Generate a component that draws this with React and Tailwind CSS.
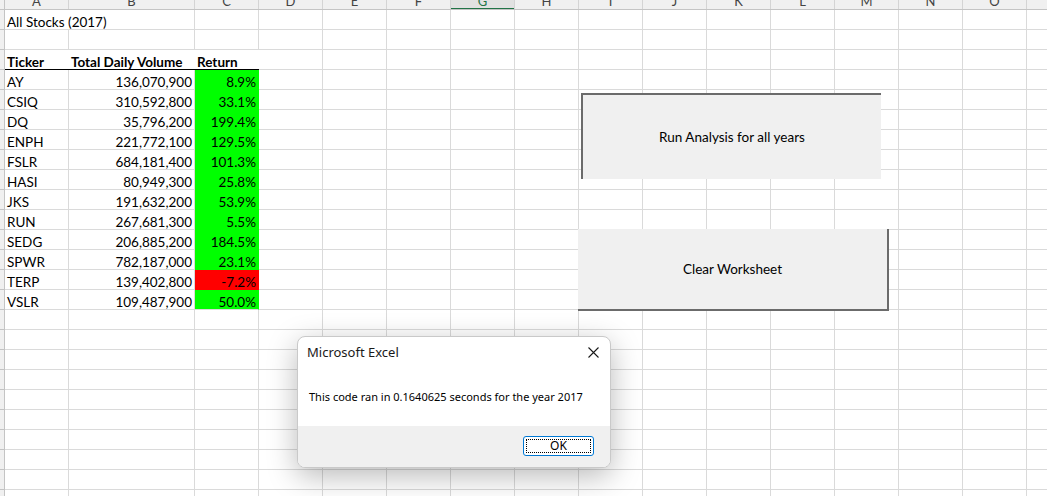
import React from "react";

const cols = [
  { key: "A", w: 64 },
  { key: "B", w: 126 },
  { key: "C", w: 64 },
  { key: "D", w: 64 },
  { key: "E", w: 64 },
  { key: "F", w: 64 },
  { key: "G", w: 64 },
  { key: "H", w: 64 },
  { key: "I", w: 64 },
  { key: "J", w: 64 },
  { key: "K", w: 64 },
  { key: "L", w: 64 },
  { key: "M", w: 64 },
  { key: "N", w: 64 },
  { key: "O", w: 64 },
  { key: "P", w: 64 },
];

const stocks = [
  ["AY", "136,070,900", "8.9%", true],
  ["CSIQ", "310,592,800", "33.1%", true],
  ["DQ", "35,796,200", "199.4%", true],
  ["ENPH", "221,772,100", "129.5%", true],
  ["FSLR", "684,181,400", "101.3%", true],
  ["HASI", "80,949,300", "25.8%", true],
  ["JKS", "191,632,200", "53.9%", true],
  ["RUN", "267,681,300", "5.5%", true],
  ["SEDG", "206,885,200", "184.5%", true],
  ["SPWR", "782,187,000", "23.1%", true],
  ["TERP", "139,402,800", "-7.2%", false],
  ["VSLR", "109,487,900", "50.0%", true],
];

const ROWS = 25;

function HeaderRow() {
  return (
    <div className="flex h-[10px] overflow-hidden border-b border-[#c4c4c4] bg-[#f0f0f0]">
      <div className="h-full w-[5px] shrink-0 border-r border-[#c4c4c4]" />
      {cols.map((c) => (
        <div
          key={c.key}
          style={{ width: c.w }}
          className={
            "relative h-full shrink-0 border-r border-[#d4d4d4] " +
            (c.key === "G" ? "bg-[#e1e1e1]" : "")
          }
        >
          <div
            className={
              "absolute inset-x-0 -top-[9px] text-center text-[13px] leading-[20px] " +
              (c.key === "G" ? "text-[#217346]" : "text-[#444]")
            }
          >
            {c.key}
          </div>
          {c.key === "G" && (
            <div className="absolute inset-x-0 -bottom-[1px] h-[2px] bg-[#217346]" />
          )}
        </div>
      ))}
    </div>
  );
}

function cellContent(r, ci) {
  // r is the 1-based sheet row
  if (r === 1 && ci === 0) return { text: "All Stocks (2017)", overflow: true };
  if (r === 3) {
    if (ci === 0) return { text: "Ticker", bold: true, underline: true };
    if (ci === 1) return { text: "Total Daily Volume", bold: true, underline: true };
    if (ci === 2) return { text: "Return", bold: true, underline: true };
  }
  const s = stocks[r - 4];
  if (s) {
    if (ci === 0) return { text: s[0] };
    if (ci === 1) return { text: s[1], right: true };
    if (ci === 2) return { text: s[2], right: true, fill: s[3] ? "green" : "red" };
  }
  return null;
}

function GridRow({ r }) {
  return (
    <div className="flex h-[20px]">
      <div className="h-full w-[5px] shrink-0 border-r border-b border-[#c4c4c4] bg-[#f0f0f0]" />
      {cols.map((c, ci) => {
        const cell = cellContent(r, ci);
        let border = "border-r border-b border-[#dadada]";
        if (cell && cell.overflow) border = "border-b border-[#dadada]";
        if (cell && cell.underline) border = "border-b border-b-black";
        let bg = "";
        if (cell && cell.fill === "green") bg = "bg-[#00ff00] border-r-[#00ff00] border-b-[#00ff00]";
        if (cell && cell.fill === "red") bg = "bg-[#ff0000] border-r-[#ff0000] border-b-[#ff0000]";
        if (r === 15 && ci === 2) bg = "bg-[#00ff00] border-r-[#00ff00]";
        return (
          <div
            key={c.key}
            style={{ width: c.w }}
            className={
              "relative flex h-full shrink-0 items-end " + border + " " + bg +
              (cell && cell.right ? " justify-end pr-[2px]" : " pl-[2px]")
            }
          >
            {cell && (
              <span
                className={
                  "whitespace-nowrap text-[13.5px] leading-[14px] text-black " +
                  (cell.bold ? "font-bold" : "")
                }
              >
                {cell.text}
              </span>
            )}
          </div>
        );
      })}
    </div>
  );
}

function CloseIcon() {
  return (
    <svg width="11" height="11" viewBox="0 0 11 11">
      <path d="M0.5 0.5 L10.5 10.5 M10.5 0.5 L0.5 10.5" stroke="#1a1a1a" strokeWidth="1.1" />
    </svg>
  );
}

export default function App() {
  return (
    <div
      className="relative h-[496px] w-[1047px] overflow-hidden bg-white"
      style={{ fontFamily: "Lato, 'Liberation Sans', sans-serif" }}
    >
      <HeaderRow />
      {Array.from({ length: ROWS }, (_, i) => (
        <GridRow key={i} r={i + 1} />
      ))}

      {/* macro buttons */}
      <div className="absolute left-[581px] top-[93px] flex h-[86px] w-[300px] items-center justify-center border-t-2 border-l-2 border-[#6b6b6b] bg-[#f0f0f0] text-[13.5px] text-black">
        Run Analysis for all years
      </div>
      <div className="absolute left-[578px] top-[229px] flex h-[82px] w-[311px] items-center justify-center border-r-2 border-b-2 border-[#6b6b6b] bg-[#f0f0f0] text-[13.5px] text-black">
        Clear Worksheet
      </div>

      {/* message box */}
      <div
        className="absolute left-[297px] top-[336px] flex h-[132px] w-[314px] flex-col overflow-hidden rounded-[8px] border border-[#c9c9c9] bg-white shadow-[0_8px_30px_rgba(0,0,0,0.28)]"
        style={{ fontFamily: "'Noto Sans', 'Open Sans', sans-serif" }}
      >
        <div className="flex h-[31px] shrink-0 items-center justify-between pl-[9px] pr-[11px]">
          <span className="text-[13px] text-[#1a1a1a]">Microsoft Excel</span>
          <CloseIcon />
        </div>
        <div className="flex h-[58px] shrink-0 items-center pl-[11px]">
          <span className="text-[11px] text-black">
            This code ran in 0.1640625 seconds for the year 2017
          </span>
        </div>
        <div className="flex flex-1 items-start justify-end bg-[#f0f0f0] pt-[10px] pr-[16px]">
          <div className="flex h-[20px] w-[71px] items-center justify-center rounded-[3px] border border-[#0078d4] bg-white p-[2px]">
            <div className="flex h-full w-full items-center justify-center border border-dotted border-black text-[12px] text-black">
              OK
            </div>
          </div>
        </div>
      </div>
    </div>
  );
}
